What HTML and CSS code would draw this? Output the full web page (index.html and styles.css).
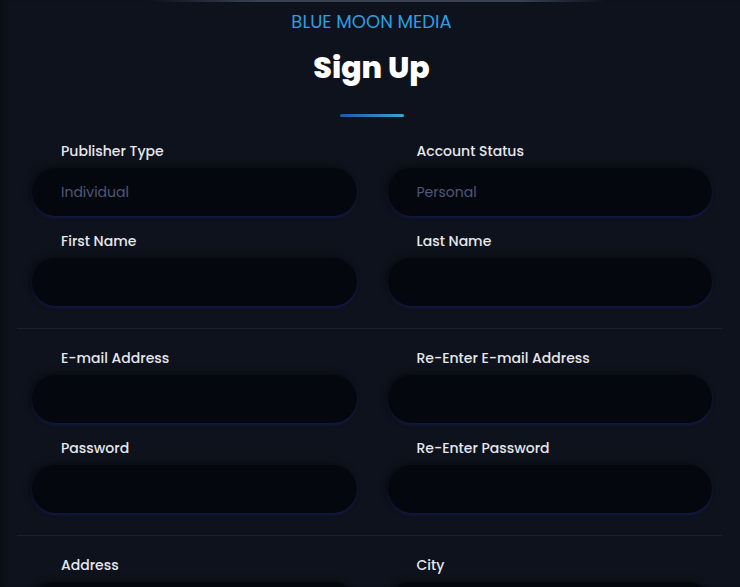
FILE: index.html
```html
<!DOCTYPE html>
<html lang="en">
<head>
<meta charset="utf-8">
<title>Sign Up - Blue Moon Media</title>
<link rel="stylesheet" href="styles.css">
</head>
<body>
<div class="page">
  <div class="topline"></div>
  <header class="head">
    <div class="brand">BLUE MOON MEDIA</div>
    <h1 class="title">Sign Up</h1>
    <div class="underline"></div>
  </header>
  <form class="form">
    <section class="section first">
      <div class="grid">
        <div class="field">
          <label class="label">Publisher Type</label>
          <input class="input" type="text" placeholder="Individual">
        </div>
        <div class="field">
          <label class="label">Account Status</label>
          <input class="input" type="text" placeholder="Personal">
        </div>
        <div class="field">
          <label class="label">First Name</label>
          <input class="input" type="text">
        </div>
        <div class="field">
          <label class="label">Last Name</label>
          <input class="input" type="text">
        </div>
      </div>
    </section>
    <section class="section">
      <div class="grid">
        <div class="field">
          <label class="label">E-mail Address</label>
          <input class="input" type="email">
        </div>
        <div class="field">
          <label class="label">Re-Enter E-mail Address</label>
          <input class="input" type="email">
        </div>
        <div class="field">
          <label class="label">Password</label>
          <input class="input" type="password">
        </div>
        <div class="field">
          <label class="label">Re-Enter Password</label>
          <input class="input" type="password">
        </div>
      </div>
    </section>
    <section class="section">
      <div class="grid">
        <div class="field">
          <label class="label">Address</label>
          <input class="input" type="text">
        </div>
        <div class="field">
          <label class="label">City</label>
          <input class="input" type="text">
        </div>
      </div>
    </section>
  </form>
</div>
</body>
</html>
```

FILE: styles.css
```css
html, body {
  margin: 0;
  padding: 0;
  background: #0e121c;
}
body {
  font-family: "Poppins", "Inter", "Open Sans", sans-serif;
  color: #e6e7ec;
  height: 587px;
  overflow: hidden;
  box-shadow: inset 6px 0 6px -4px rgba(0, 0, 0, 0.45);
}
.page {
  width: 740px;
}
.topline {
  height: 2px;
  background: linear-gradient(90deg, rgba(60,68,82,0) 20%, #3a4252 35%, #3a4252 70%, rgba(60,68,82,0) 82%);
}
.head {
  display: flex;
  flex-direction: column;
  align-items: center;
  padding-left: 3px;
}
.brand {
  margin-top: 10px;
  font-size: 18px;
  line-height: 20px;
  color: #2f9fe2;
}
.title {
  margin: 16px 0 0;
  font-size: 30px;
  line-height: 40px;
  font-weight: 800;
  color: #ffffff;
}
.underline {
  margin-top: 26px;
  width: 64px;
  height: 3px;
  border-radius: 2px;
  background: linear-gradient(90deg, #1c58a6, #3aa2da);
}
.form {
  margin: 24px 17px 0;
}
.section {
  border-top: 1px solid #1a1f2a;
  padding: 19px 11px 22px 15px;
}
.section.first {
  border-top: none;
  padding-top: 0;
}
.grid {
  display: grid;
  grid-template-columns: 1fr 1fr;
  column-gap: 31px;
  row-gap: 15px;
}
.field {
  display: flex;
  flex-direction: column;
  gap: 7px;
}
.label {
  padding-left: 29px;
  font-size: 14px;
  line-height: 20px;
  font-weight: 500;
  color: #e6e7ec;
}
.input {
  box-sizing: border-box;
  height: 48px;
  width: 100%;
  border: none;
  outline: none;
  border-radius: 24px;
  padding: 0 29px;
  background: #05070e;
  font-family: inherit;
  font-size: 14px;
  color: #e6e7ec;
  box-shadow: -3px -2px 6px rgba(0, 0, 0, 0.35), 0 2px 3px rgba(28, 34, 110, 0.55);
}
.input::placeholder {
  color: #4f5878;
}
```
